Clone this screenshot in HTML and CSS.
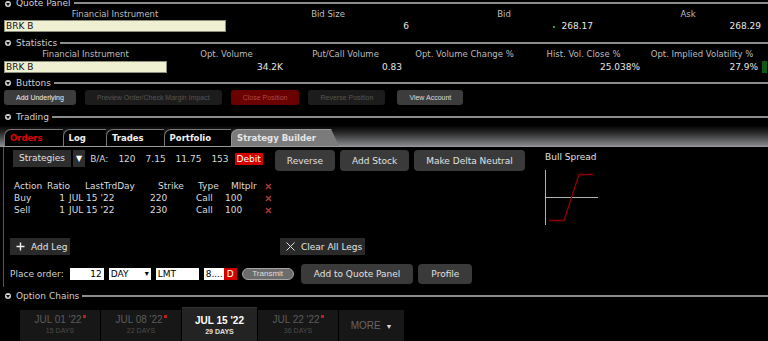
FILE: index.html
```html
<!DOCTYPE html>
<html lang="en">
<head>
    <meta charset="UTF-8">
    <meta name="viewport" content="width=device-width, initial-scale=1.0">
    <title>Trading - Strategy Builder</title>
    <link rel="stylesheet" href="styles.css">
</head>
<body>
<div class="page">
    <div class="panel-head quote-head"><span class="toggle"></span><span class="head-title">Quote Panel</span><span class="head-line"></span></div>
    <div class="quote-grid">
        <div class="col-label">Financial Instrument</div>
        <div class="col-label pad-bidsize">Bid Size</div>
        <div class="col-label">Bid</div>
        <div class="col-label pad-ask">Ask</div>
        <div class="symbol">BRK B</div>
        <div class="val">6</div>
        <div class="val"><span class="tick"></span>268.17</div>
        <div class="val">268.29</div>
    </div>

    <div class="panel-head stats-head"><span class="toggle"></span><span class="head-title">Statistics</span><span class="head-line"></span></div>
    <div class="stats-grid">
        <div class="col-label">Financial Instrument</div>
        <div class="col-label">Opt. Volume</div>
        <div class="col-label">Put/Call Volume</div>
        <div class="col-label">Opt. Volume Change %</div>
        <div class="col-label">Hist. Vol. Close %</div>
        <div class="col-label">Opt. Implied Volatility %</div>
        <div></div>
        <div class="symbol">BRK B</div>
        <div class="val">34.2K</div>
        <div class="val">0.83</div>
        <div class="val"></div>
        <div class="val">25.038%</div>
        <div class="val">27.9%</div>
        <div class="vol-flag"></div>
    </div>

    <div class="panel-head buttons-head"><span class="toggle"></span><span class="head-title">Buttons</span><span class="head-line"></span></div>
    <div class="tool-row">
        <button class="tool-btn">Add Underlying</button>
        <button class="tool-btn off">Preview Order/Check Margin Impact</button>
        <button class="tool-btn close">Close Position</button>
        <button class="tool-btn off">Reverse Position</button>
        <button class="tool-btn view">View Account</button>
    </div>

    <div class="panel-head trading-head"><span class="toggle"></span><span class="head-title">Trading</span><span class="head-line"></span></div>
    <div class="tabbar">
        <div class="tab orders">Orders</div>
        <div class="tab">Log</div>
        <div class="tab">Trades</div>
        <div class="tab">Portfolio</div>
        <div class="tab active">Strategy Builder</div>
    </div>

    <div class="builder">
        <div class="builder-main">
            <div class="strategy-row">
                <div class="select-box">Strategies</div>
                <div class="select-box arrow">&#9660;</div>
                <div class="ba">
                    <span>B/A:</span>
                    <span>120</span>
                    <span>7.15</span>
                    <span>11.75</span>
                    <span>153</span>
                </div>
                <span class="debit">Debit</span>
                <div class="action-btns">
                    <button class="btn">Reverse</button>
                    <button class="btn">Add Stock</button>
                    <button class="btn">Make Delta Neutral</button>
                </div>
            </div>

            <div class="legs">
                <div>Action</div>
                <div class="h-ratio">Ratio</div>
                <div class="h-date">LastTrdDay</div>
                <div class="h-strike">Strike</div>
                <div class="h-type">Type</div>
                <div class="h-mult">Mltplr</div>
                <div><svg class="del" width="7" height="7" viewBox="0 0 7 7"><path d="M1 1L6 6M6 1L1 6"/></svg></div>

                <div>Buy</div>
                <div class="num">1</div>
                <div>JUL 15 '22</div>
                <div>220</div>
                <div>Call</div>
                <div>100</div>
                <div><svg class="del" width="7" height="7" viewBox="0 0 7 7"><path d="M1 1L6 6M6 1L1 6"/></svg></div>

                <div>Sell</div>
                <div class="num">1</div>
                <div>JUL 15 '22</div>
                <div>230</div>
                <div>Call</div>
                <div>100</div>
                <div><svg class="del" width="7" height="7" viewBox="0 0 7 7"><path d="M1 1L6 6M6 1L1 6"/></svg></div>
            </div>

            <div class="leg-actions">
                <div><button class="flat-btn"><svg width="9" height="9" viewBox="0 0 9 9"><path d="M4.5 0.5V8.5M0.5 4.5H8.5" stroke="#eee" stroke-width="1.4"/></svg>Add Leg</button></div>
                <div><button class="flat-btn"><svg width="9" height="9" viewBox="0 0 9 9"><path d="M0.5 0.5L8.5 8.5M8.5 0.5L0.5 8.5" stroke="#ddd" stroke-width="1"/></svg>Clear All Legs</button></div>
            </div>

            <div class="order-row">
                <span class="order-label">Place order:</span>
                <span class="field qty">12</span>
                <span class="field tif">DAY<span class="caret">&#9662;</span></span>
                <span class="field otype">LMT</span>
                <span class="field price">8....</span><span class="field dflag">D</span>
                <span class="transmit">Transmit</span>
                <button class="btn quote-btn">Add to Quote Panel</button>
                <button class="btn">Profile</button>
            </div>
        </div>

        <div class="payoff">
            <div class="payoff-title">Bull Spread</div>
            <svg class="payoff-chart" width="56" height="57" viewBox="0 0 56 57">
                <path d="M1.5 1V56M1 28.5H54" stroke="#b0b0b0" stroke-width="1" fill="none"/>
                <path d="M5 51.5H20L35 5.5H49" stroke="#8e0000" stroke-width="1.3" fill="none"/>
            </svg>
        </div>
    </div>

    <div class="panel-head chains-head"><span class="toggle"></span><span class="head-title">Option Chains</span><span class="head-line"></span></div>
    <div class="expiries">
        <div class="expiry"><div class="exp-date">JUL 01 '22<span class="flag"></span></div><div class="exp-days">15 DAYS</div></div>
        <div class="expiry"><div class="exp-date">JUL 08 '22<span class="flag"></span></div><div class="exp-days">22 DAYS</div></div>
        <div class="expiry current"><div class="exp-date">JUL 15 '22</div><div class="exp-days">29 DAYS</div></div>
        <div class="expiry"><div class="exp-date">JUL 22 '22<span class="flag"></span></div><div class="exp-days">36 DAYS</div></div>
        <div class="expiry more">MORE <span class="more-caret">&#9660;</span></div>
    </div>
</div>
</body>
</html>
```

FILE: styles.css
```css
body {
    margin: 0;
    height: 341px;
    overflow: hidden;
    background: #000;
    color: #e2e2e2;
    font-family: "DejaVu Sans", Verdana, sans-serif;
    font-size: 9px;
}
button {
    font-family: inherit;
    border: none;
    cursor: pointer;
}

/* panel headers */
.panel-head {
    display: flex;
    align-items: center;
    height: 12px;
    padding-left: 5px;
}
.quote-head {
    height: 9px;
    align-items: flex-end;
}
.toggle {
    display: flex;
    align-items: center;
    justify-content: center;
    width: 6px;
    height: 6px;
    border-radius: 50%;
    background: #cfcfcf;
    margin-right: 5px;
}
.toggle::after {
    content: "";
    border-left: 2px solid transparent;
    border-right: 2px solid transparent;
    border-top: 3px solid #111;
    margin-top: 1px;
}
.head-title {
    color: #cfcfcf;
    font-size: 9px;
    line-height: 11px;
}
.head-line {
    flex: 1;
    height: 2px;
    background: #8c8c8c;
    margin-left: 3px;
}
.quote-head .toggle {
    margin-bottom: 2px;
}
.quote-head .head-line {
    margin-bottom: 5px;
}
.stats-head {
    margin-top: 5px;
}
.buttons-head {
    margin-top: 4px;
}
.trading-head {
    margin-top: 6px;
}
.chains-head {
    margin-top: 3px;
}

/* quote + statistics grids */
.quote-grid {
    display: grid;
    grid-template-columns: 222px 186px 184px 168px;
    grid-template-rows: 11px 12px;
    margin: 0 0 0 4px;
}
.stats-grid {
    display: grid;
    grid-template-columns: 163px 119px 119px 119px 119px 118px 6px;
    grid-template-rows: 11px 12px;
    margin: 0 0 0 4px;
    row-gap: 1px;
}
.col-label {
    text-align: center;
    color: #bdbdbd;
    font-size: 8.5px;
    line-height: 11px;
}
.pad-bidsize {
    padding-left: 18px;
}
.pad-ask {
    padding-left: 16px;
}
.symbol {
    box-sizing: border-box;
    height: 12px;
    background: #efefd2;
    border: 1px solid #8f8f80;
    color: #111;
    line-height: 10px;
    padding-left: 1px;
}
.val {
    text-align: right;
    line-height: 12px;
    padding-right: 3px;
    color: #e6e6e6;
}
.tick {
    display: inline-block;
    width: 2px;
    height: 2px;
    background: #3f9a3f;
    vertical-align: middle;
    margin-right: 7px;
}
.vol-flag {
    background: #0b5a12;
    margin-left: 1px;
}

/* buttons panel */
.tool-row {
    display: flex;
    gap: 9px;
    margin: 1px 0 0 4px;
}
.tool-btn {
    height: 15px;
    padding: 0 12px;
    border-radius: 3px;
    background: #3c3c3c;
    color: #f0f0f0;
    font-family: "Liberation Sans", Arial, sans-serif;
    font-size: 7px;
}
.tool-btn.off {
    background: #1c1c1c;
    color: #555;
}
.tool-btn.close {
    background: #6a0000;
    color: #b04a4a;
}
.tool-btn.view {
    margin-left: 3px;
    color: #ddd;
}

/* trading tabs */
.tabbar {
    display: flex;
    align-items: flex-end;
    height: 23px;
    padding-left: 4px;
    background: linear-gradient(#000 10%, #2c2c2c 45%, #888a8e);
    border-bottom: 1px solid #9a9a9a;
}
.tab {
    box-sizing: border-box;
    height: 17px;
    padding: 0 20px 0 5px;
    background: #000;
    border-top: 1px solid #777;
    border-left: 1px solid #777;
    border-top-left-radius: 7px;
    color: #f2f2f2;
    font-weight: bold;
    font-size: 8.5px;
    line-height: 16px;
}
.tab.orders {
    color: #e00000;
}
.tab.active {
    background: #7b7b7b;
    color: #e6e6e6;
    border-color: #999;
    padding-right: 23px;
    clip-path: polygon(0 0, calc(100% - 8px) 0, 100% 100%, 0 100%);
}

/* strategy builder */
.builder {
    display: flex;
    margin-left: 3px;
    border-left: 1px solid #555;
    padding: 3px 0 3px 0;
}
.builder-main {
    width: 535px;
    padding-left: 6px;
}
.strategy-row {
    display: flex;
    align-items: flex-start;
    margin-left: 3px;
}
.select-box {
    height: 17px;
    line-height: 17px;
    padding: 0 6px;
    background: #2e2e2e;
    color: #e0e0e0;
}
.select-box.arrow {
    margin-left: 2px;
    padding: 0 3px;
    font-size: 8px;
    color: #fff;
}
.ba {
    display: flex;
    gap: 10px;
    height: 17px;
    align-items: center;
    margin-left: 5px;
    color: #d8d8d8;
}
.debit {
    margin: 3px 0 0 6px;
    height: 12px;
    line-height: 12px;
    padding: 0 2px;
    background: #d40000;
    color: #fff;
}
.action-btns {
    display: flex;
    gap: 5px;
    margin-left: 12px;
}
.btn {
    height: 21px;
    padding: 0 12px;
    border-radius: 4px;
    background: #3a3a3a;
    color: #e0e0e0;
    font-size: 9px;
}

.legs {
    display: grid;
    grid-template-columns: 33px 22px 81px 46px 29px 40px 10px;
    grid-auto-rows: 12px;
    align-items: center;
    margin: 9px 0 0 4px;
    color: #dcdcdc;
}
.legs .num {
    text-align: right;
    padding-right: 4px;
}
.h-ratio {
    text-align: right;
}
.h-date {
    padding-left: 16px;
}
.h-strike {
    padding-left: 8px;
}
.h-type {
    padding-left: 2px;
}
.h-mult {
    padding-left: 6px;
}
.del {
    display: block;
    stroke: #a83434;
    stroke-width: 1.6;
}

.leg-actions {
    display: grid;
    grid-template-columns: 270px auto;
    margin-top: 22px;
}
.flat-btn {
    display: flex;
    align-items: center;
    gap: 6px;
    height: 17px;
    padding: 0 3px 0 6px;
    background: #2a2a2a;
    color: #e4e4e4;
    font-size: 9px;
}

.order-row {
    display: flex;
    align-items: center;
    gap: 5px;
    height: 20px;
    margin-top: 9px;
}
.order-label {
    color: #d0d0d0;
    margin-right: 1px;
}
.field {
    box-sizing: border-box;
    height: 12px;
    line-height: 12px;
    background: #fff;
    color: #000;
    padding: 0 2px;
}
.field.qty {
    width: 34px;
    text-align: right;
}
.field.tif {
    width: 42px;
    display: flex;
    justify-content: space-between;
}
.caret {
    font-size: 8px;
}
.field.otype {
    width: 43px;
}
.field.price {
    width: 20px;
    margin-right: -5px;
}
.field.dflag {
    width: 13px;
    background: #d40000;
    color: #fff;
    text-align: center;
}
.transmit {
    box-sizing: border-box;
    width: 52px;
    height: 12px;
    line-height: 10px;
    border: 1px solid #a5a5a5;
    border-radius: 6px;
    background: #6c6c6c;
    color: #dedede;
    text-align: center;
    font-family: "Liberation Sans", Arial, sans-serif;
    font-size: 8px;
}
.order-row .btn {
    height: 20px;
    padding: 0 13px;
}
.btn.quote-btn {
    margin-left: 2px;
}

.payoff {
    padding-top: 1px;
}
.payoff-title {
    line-height: 12px;
    color: #e0e0e0;
}
.payoff-chart {
    display: block;
    margin: 6px 0 0 -1px;
}

/* option chain expiries */
.expiries {
    display: flex;
    gap: 1px;
    margin: 5px 0 0 20px;
    height: 40px;
}
.expiry {
    width: 80px;
    margin-top: 3px;
    padding-top: 4px;
    background: #171717;
    text-align: center;
    font-family: "Liberation Sans", Arial, sans-serif;
}
.exp-date {
    font-size: 10px;
    line-height: 12px;
    color: #5c5c5c;
}
.exp-days {
    font-size: 7px;
    line-height: 9px;
    color: #4c4c4c;
}
.flag {
    display: inline-block;
    width: 3px;
    height: 3px;
    background: #b82020;
    vertical-align: 5px;
    margin-left: 1px;
}
.expiry.current {
    width: 75px;
    margin-top: 0;
    padding-top: 7px;
    background: #232323;
    border-top: 1px solid #333;
}
.expiry.current .exp-date {
    color: #fff;
    font-weight: bold;
}
.expiry.current .exp-days {
    color: #e0e0e0;
    font-weight: bold;
}
.expiry.more {
    width: 65px;
    padding-top: 10px;
    font-size: 10px;
    color: #666;
}
.more-caret {
    font-size: 7px;
    color: #ddd;
    margin-left: 2px;
}
```
